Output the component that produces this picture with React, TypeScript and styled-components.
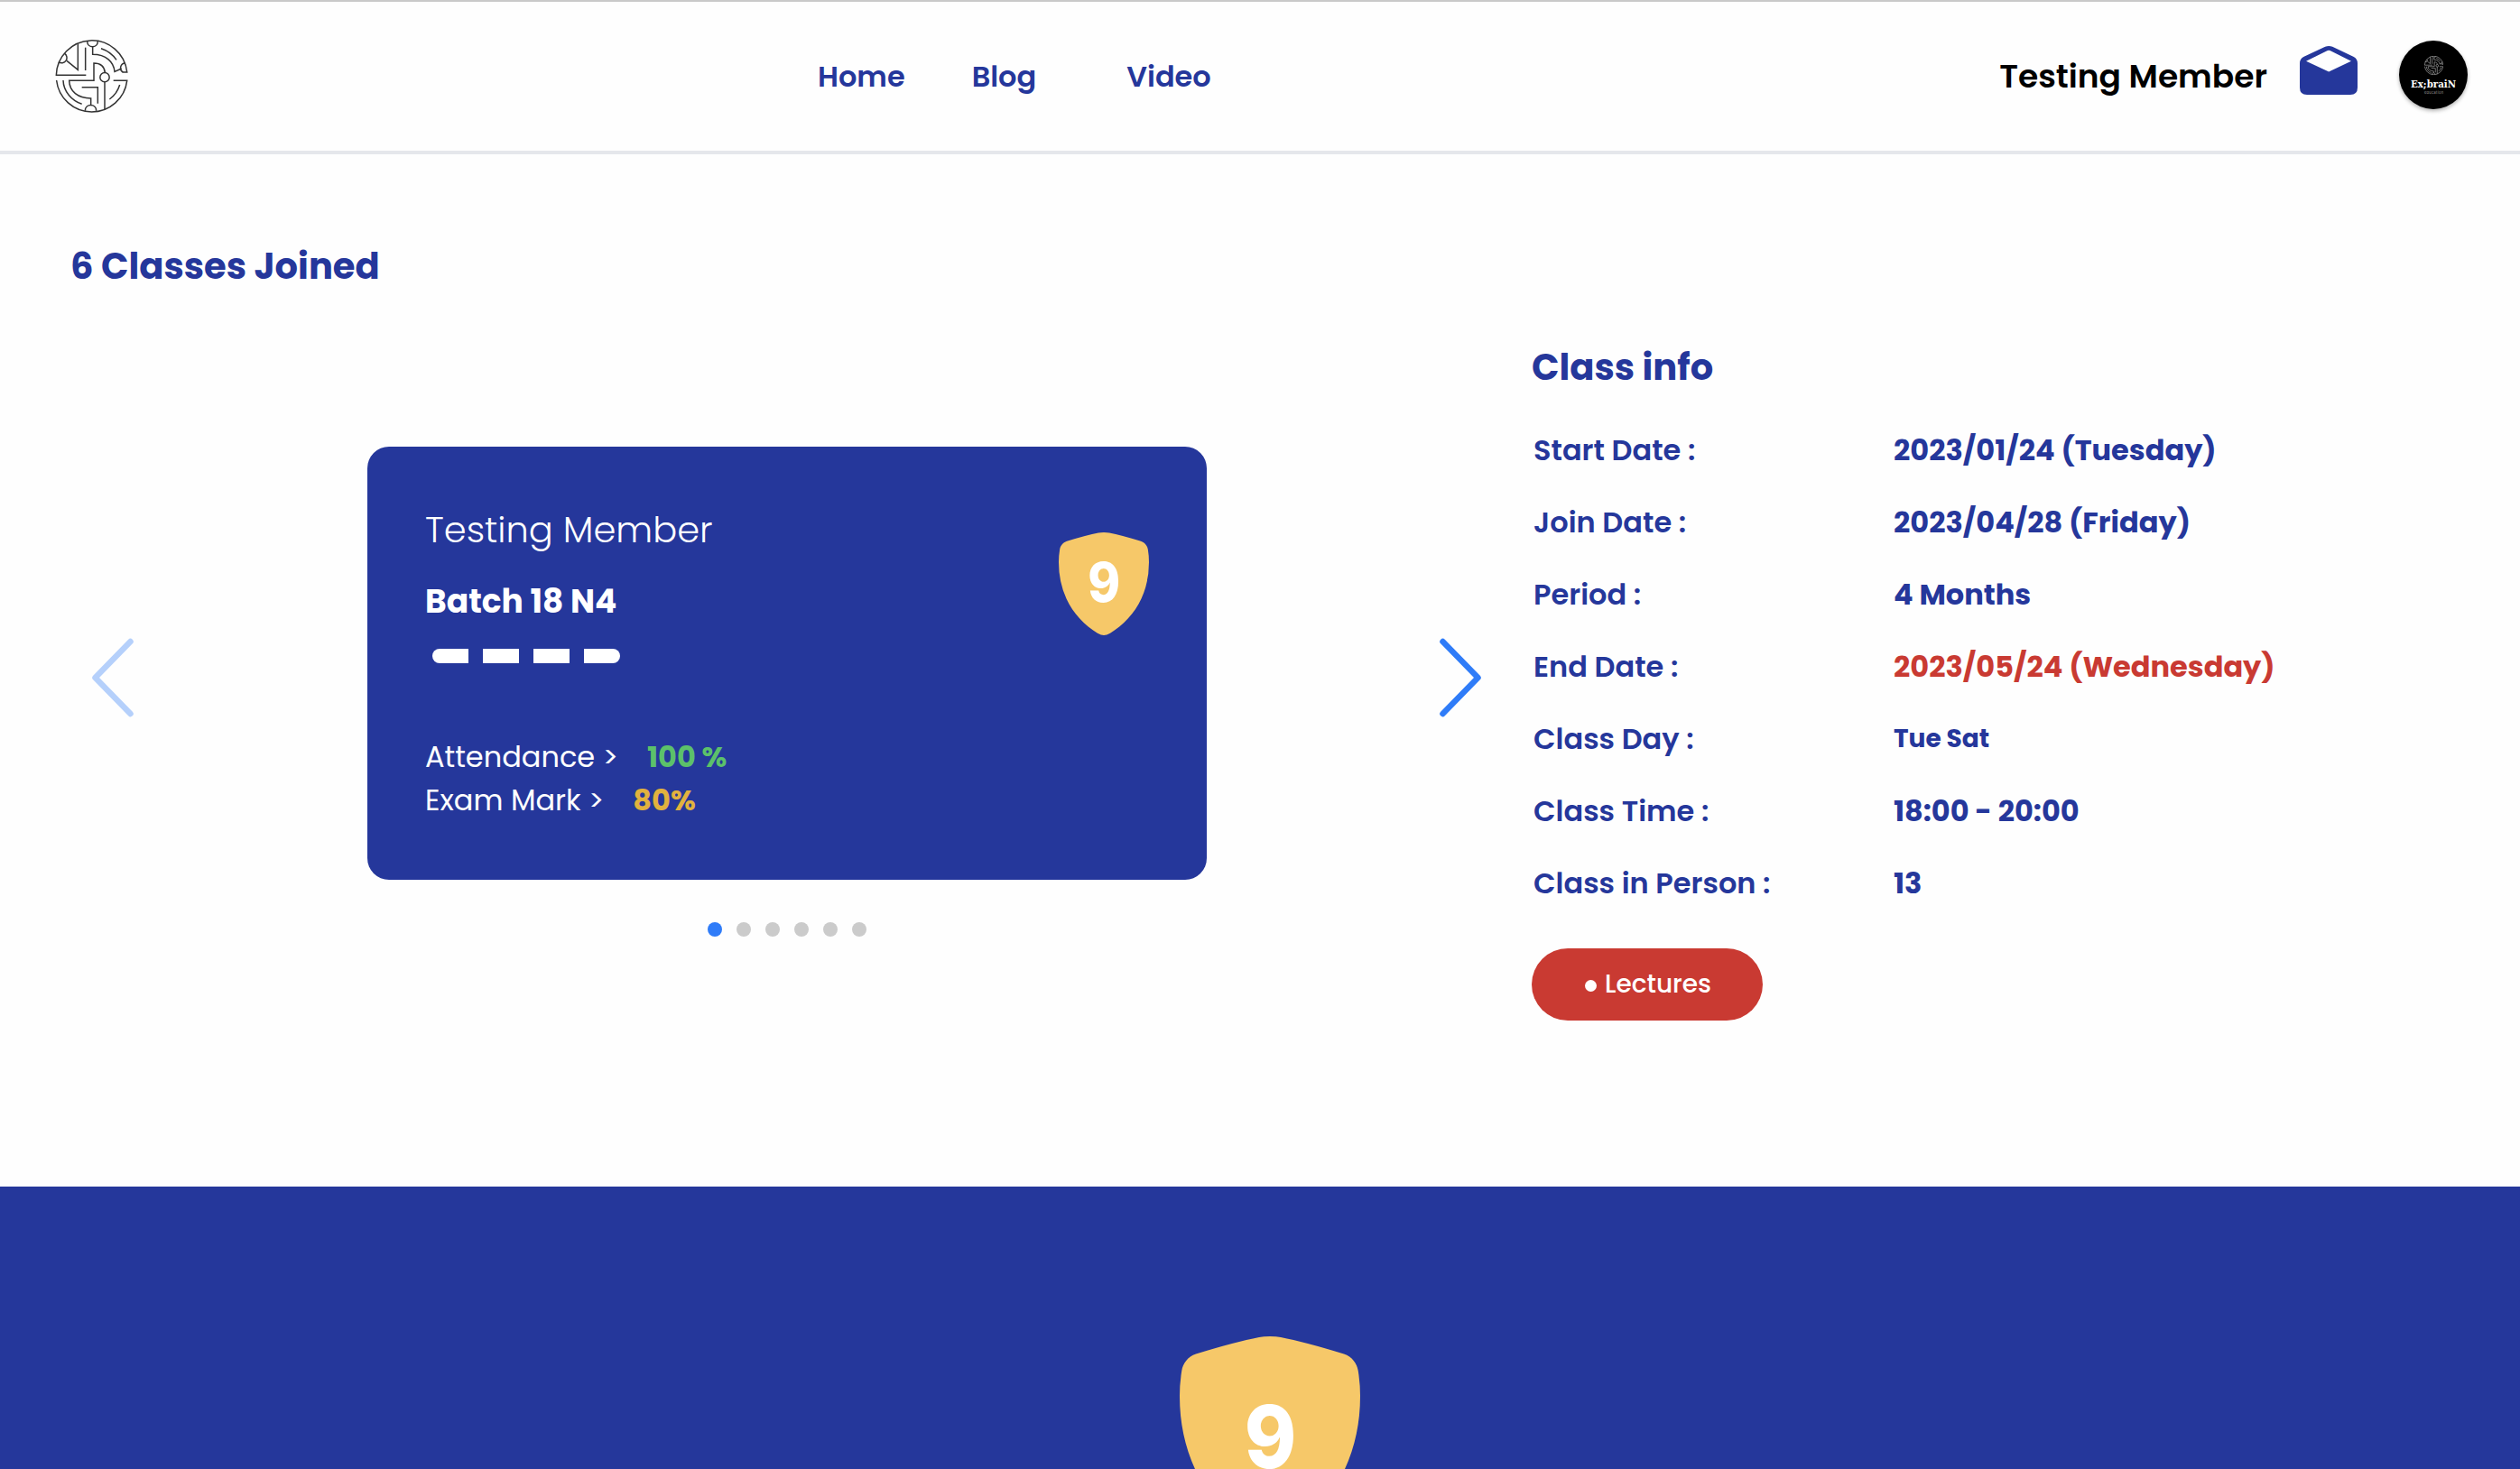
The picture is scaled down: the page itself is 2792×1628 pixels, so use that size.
import React from "react";
import styled, { createGlobalStyle } from "styled-components";

const colors = {
  navy: "#25379b",
  gold: "#f6c869",
  red: "#c93a32",
  green: "#5cc16a",
  amber: "#e1b23e",
  sky: "#2f7cf8",
  grey: "#cbcbcb",
};

const GlobalStyle = createGlobalStyle`
  * { box-sizing: border-box; }
  body {
    margin: 0;
    background: #fefefe;
    font-family: Poppins, Inter, "Open Sans", sans-serif;
    color: ${colors.navy};
  }
`;

const Page = styled.div`
  height: 1628px;
  overflow: hidden;
  display: flex;
  flex-direction: column;
`;

const Header = styled.header`
  height: 171px;
  flex: none;
  display: grid;
  grid-template-columns: 845px 1fr auto;
  align-items: center;
  padding: 0 58px 0 61px;
  border-top: 2px solid #c9c9c9;
  border-bottom: 4px solid #e5e7eb;
`;

const Nav = styled.nav`
  display: flex;
`;

const NavLink = styled.a<{ $gap?: number }>`
  font-size: 32px;
  line-height: 48px;
  font-weight: 600;
  margin-right: ${(p) => p.$gap ?? 0}px;
`;

const Account = styled.div`
  display: flex;
  align-items: center;
`;

const AccountName = styled.span`
  font-size: 36px;
  line-height: 54px;
  font-weight: 600;
  color: #000;
`;

const MailSvg = styled.svg`
  width: 64px;
  height: 54px;
  margin: 0 46px 13px 36px;
`;

const Avatar = styled.div`
  width: 76px;
  height: 76px;
  border-radius: 50%;
  background: #000;
  margin-bottom: 3px;
  box-shadow: 0 2px 4px rgba(0, 0, 0, 0.3);

  svg {
    display: block;
  }
`;

const Main = styled.main`
  flex: none;
  height: 1144px;
  padding: 94px 78px 0;
`;

const Heading = styled.h2`
  margin: 0;
  font-size: 40px;
  line-height: 60px;
  font-weight: 700;
`;

const Overview = styled.section`
  display: grid;
  grid-template-columns: 1619px 1fr;
`;

const Carousel = styled.div`
  display: grid;
  grid-template-columns: 305px 930px 1fr;
  padding: 170px 0 0 24px;
`;

const Arrow = styled.svg<{ $faded?: boolean; $end?: boolean }>`
  width: 46px;
  height: 88px;
  margin-top: 212px;
  justify-self: ${(p) => (p.$end ? "end" : "start")};
  margin-right: ${(p) => (p.$end ? 56 : 0)}px;
  opacity: ${(p) => (p.$faded ? 0.35 : 1)};
`;

const Slide = styled.div`
  display: flex;
  flex-direction: column;
  align-items: center;
`;

const Card = styled.article`
  width: 930px;
  height: 480px;
  border-radius: 24px;
  background: ${colors.navy};
  color: #fff;
  display: flex;
  justify-content: space-between;
  padding: 62px 64px 0;
`;

const MemberName = styled.div`
  font-size: 40px;
  line-height: 60px;
  font-weight: 300;
`;

const BatchName = styled.div`
  font-size: 36px;
  line-height: 54px;
  font-weight: 700;
  margin-top: 23px;
`;

const Progress = styled.div`
  display: flex;
  gap: 16px;
  margin: 25px 0 80px 8px;
`;

const Step = styled.span`
  width: 40px;
  height: 16px;
  background: #fff;

  &:first-child {
    border-radius: 8px 0 0 8px;
  }
  &:last-child {
    border-radius: 0 8px 8px 0;
  }
`;

const Stat = styled.div`
  display: flex;
  font-size: 32px;
  line-height: 48px;
`;

const StatValue = styled.span<{ $color: string }>`
  font-weight: 700;
  margin-left: 32px;
  color: ${(p) => p.$color};
`;

const ShieldSvg = styled.svg<{ $w: number }>`
  flex: none;
  width: ${(p) => p.$w}px;
  height: ${(p) => p.$w * 1.14}px;
`;

const ShieldSlot = styled.div`
  padding-top: 33px;
`;

const Dots = styled.div`
  display: flex;
  gap: 16px;
  margin-top: 47px;
`;

const Dot = styled.span<{ $active?: boolean }>`
  width: 16px;
  height: 16px;
  border-radius: 50%;
  background: ${(p) => (p.$active ? colors.sky : colors.grey)};
`;

const Info = styled.div`
  padding-top: 52px;
`;

const InfoList = styled.dl`
  margin: 22px 0 32px 2px;
`;

const InfoRow = styled.div`
  height: 80px;
  display: grid;
  grid-template-columns: 399px 1fr;
  align-items: center;
`;

const InfoLabel = styled.dt`
  font-size: 32px;
  line-height: 48px;
  font-weight: 600;
`;

const InfoValue = styled.dd<{ $color?: string; $small?: boolean }>`
  margin: 0;
  font-size: ${(p) => (p.$small ? 28 : 32)}px;
  line-height: 48px;
  font-weight: 700;
  color: ${(p) => p.$color ?? colors.navy};
`;

const LecturesButton = styled.button`
  display: flex;
  align-items: center;
  justify-content: center;
  gap: 9px;
  width: 256px;
  height: 80px;
  padding: 0 0 0 2px;
  border: 0;
  border-radius: 40px;
  background: ${colors.red};
  color: #fff;
  font: 500 28px/42px Poppins, Inter, "Open Sans", sans-serif;
`;

const LiveDot = styled.span`
  width: 13px;
  height: 13px;
  margin-top: 2px;
  border-radius: 50%;
  background: #fff;
`;

const Banner = styled.section`
  flex: 1;
  min-height: 0;
  display: flex;
  justify-content: center;
  padding: 166px 0 0 22px;
  background: ${colors.navy};
`;

function LogoMark({ x = 0, y = 0, size, color, stroke }: { x?: number; y?: number; size: number; color: string; stroke: number }) {
  return (
    <svg x={x} y={y} width={size} height={size} viewBox="64 72 243 243" fill="none" stroke={color} strokeWidth={stroke}>
      <path d="M167 190H68A118 118 0 0 1 303.300 180H288" />
      <path d="M68.800 207A118 118 0 0 0 303.200 208H258" />
      <path d="M171 77C171 101 206 101 206 77" />
      <path d="M189 96V121C234 121 259 146 262 178L285 168" />
      <path d="M297 150A16 16 0 0 0 290 180" />
      <path d="M96 118A17 17 0 1 1 76 146" />
      <path d="M103 142L140 172V85" />
      <path d="M165 98V174" />
      <path d="M217 101Q250 112 268 139" />
      <path d="M230 181C228 162 215 150 193 150V208H111C112 245 140 266 183 267V290" />
      <circle cx="229" cy="197" r="15.500" />
      <path d="M229 213V303" />
      <path d="M164 308C164 283 201 283 201 308" />
      <path d="M91 207C92 245 120 275 153 286" />
      <path d="M153 230H206V284" />
      <path d="M279 222Q270 252 245 270" />
    </svg>
  );
}

function MailIcon() {
  return (
    <MailSvg viewBox="84 93 191 161">
      <path
        fill={colors.navy}
        fillRule="evenodd"
        d="M84 150Q84 135 98 128L168 95Q180 91 192 95L261 128Q275 135 275 150V230Q275 254 251 254H108Q84 254 84 230ZM105 143L180 178L254 143L187 109Q180 105 173 109Z"
      />
    </MailSvg>
  );
}

function Shield({ width, fontSize, baseline }: { width: number; fontSize: number; baseline: number }) {
  return (
    <ShieldSvg $w={width} viewBox="0 0 200 228">
      <path
        fill={colors.gold}
        d="M100 0Q93 0 88 1Q62 6 18 19.500C9 22.500 3.500 30 2.300 38Q0 52 0 66Q0 110 17 147C32 180 58 206 86 223.500Q94 228 100 228Q106 228 114 223.500C142 206 168 180 183 147Q200 110 200 66Q200 52 197.700 38C196.500 30 191 22.500 182 19.500Q138 6 112 1Q107 0 100 0Z"
      />
      <text
        x="100.500"
        y={baseline}
        fill="#fff"
        fontFamily="Inter, sans-serif"
        fontWeight="800"
        fontSize={fontSize}
        textAnchor="middle"
        textLength={fontSize * 0.6}
        lengthAdjust="spacingAndGlyphs"
      >
        9
      </text>
    </ShieldSvg>
  );
}

const rows: { label: string; value: string; color?: string; small?: boolean }[] = [
  { label: "Start Date :", value: "2023/01/24 (Tuesday)" },
  { label: "Join Date :", value: "2023/04/28 (Friday)" },
  { label: "Period :", value: "4 Months" },
  { label: "End Date :", value: "2023/05/24 (Wednesday)", color: colors.red },
  { label: "Class Day :", value: "Tue Sat", small: true },
  { label: "Class Time :", value: "18:00 - 20:00" },
  { label: "Class in Person :", value: "13" },
];

export default function App() {
  return (
    <Page>
      <GlobalStyle />
      <Header>
        <LogoMark size={81} color="#333" stroke={4.5} />
        <Nav>
          <NavLink $gap={74}>Home</NavLink>
          <NavLink $gap={100}>Blog</NavLink>
          <NavLink>Video</NavLink>
        </Nav>
        <Account>
          <AccountName>Testing Member</AccountName>
          <MailIcon />
          <Avatar>
            <svg width="76" height="76" viewBox="0 0 76 76">
              <LogoMark x={28} y={17} size={21} color="#bbb" stroke={7} />
              <text x="38" y="51.500" fill="#fff" fontFamily='"DejaVu Serif", serif' fontWeight="700" fontSize="11.500" textAnchor="middle" textLength="50" lengthAdjust="spacingAndGlyphs">
                Ex;braiN
              </text>
              <text x="38.500" y="58.500" fill="#999" fontFamily="Inter, sans-serif" fontSize="4" textAnchor="middle" textLength="21">
                education
              </text>
            </svg>
          </Avatar>
        </Account>
      </Header>
      <Main>
        <Heading>6 Classes Joined</Heading>
        <Overview>
          <Carousel>
            <Arrow $faded viewBox="0 0 46 88" fill="none" stroke={colors.sky} strokeWidth="6.500" strokeLinecap="round" strokeLinejoin="round">
              <path d="M42.500 4L3.500 44L42.500 84" />
            </Arrow>
            <Slide>
              <Card>
                <div>
                  <MemberName>Testing Member</MemberName>
                  <BatchName>Batch 18 N4</BatchName>
                  <Progress>
                    <Step />
                    <Step />
                    <Step />
                    <Step />
                  </Progress>
                  <Stat>
                    Attendance &gt;<StatValue $color={colors.green}>100 %</StatValue>
                  </Stat>
                  <Stat>
                    Exam Mark &gt;<StatValue $color={colors.amber}>80%</StatValue>
                  </Stat>
                </div>
                <ShieldSlot>
                  <Shield width={100} fontSize={120} baseline={154.5} />
                </ShieldSlot>
              </Card>
              <Dots>
                {[0, 1, 2, 3, 4, 5].map((i) => (
                  <Dot key={i} $active={i === 0} />
                ))}
              </Dots>
            </Slide>
            <Arrow $end viewBox="0 0 46 88" fill="none" stroke={colors.sky} strokeWidth="6.500" strokeLinecap="round" strokeLinejoin="round">
              <path d="M3.500 4L42.500 44L3.500 84" />
            </Arrow>
          </Carousel>
          <Info>
            <Heading>Class info</Heading>
            <InfoList>
              {rows.map((r) => (
                <InfoRow key={r.label}>
                  <InfoLabel>{r.label}</InfoLabel>
                  <InfoValue $color={r.color} $small={r.small}>
                    {r.value}
                  </InfoValue>
                </InfoRow>
              ))}
            </InfoList>
            <LecturesButton>
              <LiveDot />
              Lectures
            </LecturesButton>
          </Info>
        </Overview>
      </Main>
      <Banner>
        <Shield width={200} fontSize={96} baseline={146} />
      </Banner>
    </Page>
  );
}
